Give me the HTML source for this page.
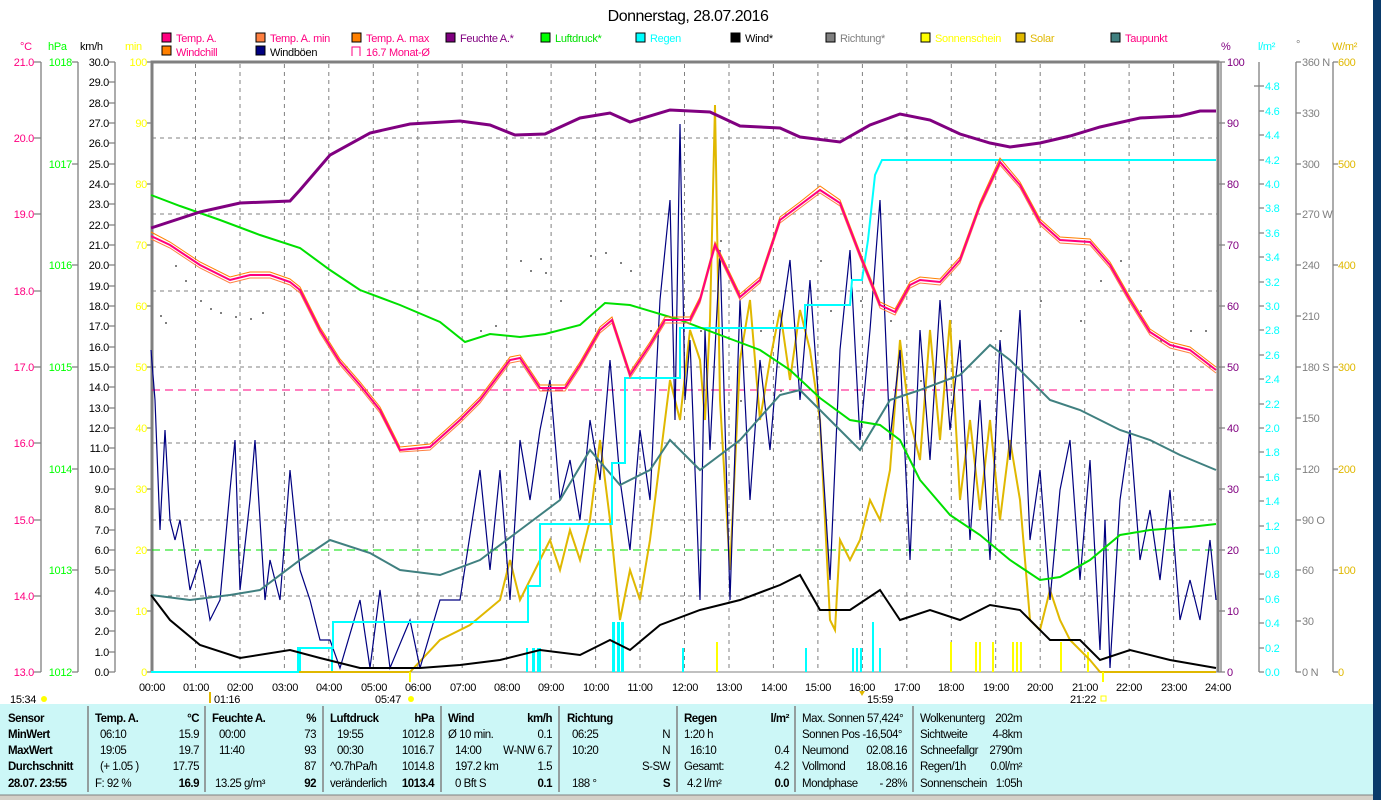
<!DOCTYPE html>
<html><head><meta charset="utf-8"><style>
html,body{margin:0;padding:0;background:#fff;width:1381px;height:800px;overflow:hidden}
svg{display:block;font-family:"Liberation Sans",sans-serif}
text{font-size:11px;letter-spacing:-0.3px}
.tb text{font-size:11.5px;letter-spacing:-0.5px}
</style></head><body>
<svg width="1381" height="800" viewBox="0 0 1381 800" xmlns="http://www.w3.org/2000/svg">
<rect width="1381" height="800" fill="#fff"/>
<text x="688" y="21" text-anchor="middle" style="font-size:16px;letter-spacing:-0.5px" fill="#000">Donnerstag, 28.07.2016</text>
<g stroke="#000" stroke-width="1">
<rect x="162" y="33" width="9" height="9" fill="#ff0080"/>
<rect x="162" y="46" width="9" height="9" fill="#ff8000"/>
<rect x="256" y="33" width="9" height="9" fill="#ff8040"/>
<rect x="256" y="46" width="9" height="9" fill="#000080"/>
<rect x="352" y="33" width="9" height="9" fill="#ff8000"/>
<rect x="446" y="33" width="9" height="9" fill="#800080"/>
<rect x="541" y="33" width="9" height="9" fill="#00ff00"/>
<rect x="636" y="33" width="9" height="9" fill="#00ffff"/>
<rect x="731" y="33" width="9" height="9" fill="#000"/>
<rect x="826" y="33" width="9" height="9" fill="#808080"/>
<rect x="921" y="33" width="9" height="9" fill="#ffff00"/>
<rect x="1016" y="33" width="9" height="9" fill="#e0b800"/>
<rect x="1111" y="33" width="9" height="9" fill="#408080"/>
</g>
<path d="M352 56V47h8v9" fill="none" stroke="#ff0080"/>
<g>
<text x="176" y="42" fill="#ff0080">Temp. A.</text>
<text x="176" y="56" fill="#ff0080">Windchill</text>
<text x="270" y="42" fill="#ff0080">Temp. A. min</text>
<text x="270" y="56" fill="#000">Windböen</text>
<text x="366" y="42" fill="#ff0080">Temp. A. max</text>
<text x="366" y="56" fill="#ff0080">16.7 Monat-Ø</text>
<text x="460" y="42" fill="#800080">Feuchte A.*</text>
<text x="555" y="42" fill="#00e000">Luftdruck*</text>
<text x="650" y="42" fill="#00ffff">Regen</text>
<text x="745" y="42" fill="#000">Wind*</text>
<text x="840" y="42" fill="#808080">Richtung*</text>
<text x="935" y="42" fill="#ffff00">Sonnenschein</text>
<text x="1030" y="42" fill="#e0b800">Solar</text>
<text x="1125" y="42" fill="#ff0080">Taupunkt</text>
</g>
<text x="20" y="50" fill="#ff0080">°C</text>
<text x="48" y="50" fill="#00ff00">hPa</text>
<text x="80" y="50" fill="#000">km/h</text>
<text x="125" y="50" fill="#ffff00">min</text>
<text x="1221" y="50" fill="#800080">%</text>
<text x="1258" y="50" fill="#00ffff">l/m²</text>
<text x="1296" y="48" fill="#808080">°</text>
<text x="1332" y="50" fill="#e0b800">W/m²</text>

<g stroke="#808080" stroke-dasharray="4,4" stroke-width="1">
<path d="M195.5 64V672M240 64V672M284.4 64V672M328.8 64V672M373.3 64V672M417.8 64V672M462.2 64V672M506.7 64V672M551.1 64V672M595.6 64V672M640 64V672M684.5 64V672M729 64V672M773.4 64V672M817.9 64V672M862.4 64V672M906.8 64V672M951.3 64V672M995.7 64V672M1040.2 64V672M1084.7 64V672M1129.1 64V672M1173.6 64V672"/>
<path d="M152 138H1217M152 214H1217M152 291H1217M152 367H1217M152 443H1217M152 520H1217M152 596H1217"/>
</g>
<path d="M152 672V62H1218V672" fill="none" stroke="#808080" stroke-width="3"/>
<path d="M152 672H1218" stroke="#808080" stroke-width="1"/>
<g stroke="#808080" stroke-width="1.3" fill="none">
<path d="M41 62V672M78 62V672M115 62V672M1221 62V672M1259 62V672M1296 62V672M1333 62V672"/>
<path d="M34 62h7M34 138h7M34 214h7M34 291h7M34 367h7M34 443h7M34 520h7M34 596h7M34 672h7"/>
<path d="M72 62h6M72 164h6M72 265h6M72 367h6M72 469h6M72 570h6M72 672h6"/>
<path d="M109 62h6M109 82h6M109 103h6M109 123h6M109 143h6M109 164h6M109 184h6M109 204h6M109 225h6M109 245h6M109 265h6M109 286h6M109 306h6M109 326h6M109 347h6M109 367h6M109 387h6M109 408h6M109 428h6M109 448h6M109 469h6M109 489h6M109 509h6M109 530h6M109 550h6M109 570h6M109 591h6M109 611h6M109 631h6M109 652h6M109 672h6"/>
<path d="M147 62h5M147 123h5M147 184h5M147 245h5M147 306h5M147 367h5M147 428h5M147 489h5M147 550h5M147 611h5M147 672h5"/>
<path d="M1218 62h7M1218 123h7M1218 184h7M1218 245h7M1218 306h7M1218 367h7M1218 428h7M1218 489h7M1218 550h7M1218 611h7M1218 672h7"/>
<path d="M1254 86h10M1259 111h5M1259 135h5M1259 160h5M1259 184h5M1259 208h5M1259 233h5M1259 257h5M1259 282h5M1259 306h5M1259 330h5M1259 355h5M1259 379h5M1259 404h5M1259 428h5M1259 452h5M1259 477h5M1259 501h5M1259 526h5M1259 550h5M1259 574h5M1259 599h5M1259 623h5M1259 648h5M1259 672h5"/>
<path d="M1296 62h5M1296 113h5M1296 164h5M1296 214h5M1296 265h5M1296 316h5M1296 367h5M1296 418h5M1296 469h5M1296 520h5M1296 570h5M1296 621h5M1296 672h5"/>
<path d="M1333 62h5M1333 164h5M1333 265h5M1333 367h5M1333 469h5M1333 570h5M1333 672h5"/>
</g>
<g fill="#ff0080" text-anchor="end">
<text x="34" y="66">21.0</text><text x="34" y="142">20.0</text><text x="34" y="218">19.0</text><text x="34" y="295">18.0</text><text x="34" y="371">17.0</text><text x="34" y="447">16.0</text><text x="34" y="524">15.0</text><text x="34" y="600">14.0</text><text x="34" y="676">13.0</text>
</g>
<g fill="#00ff00" text-anchor="end">
<text x="72" y="66">1018</text><text x="72" y="168">1017</text><text x="72" y="269">1016</text><text x="72" y="371">1015</text><text x="72" y="473">1014</text><text x="72" y="574">1013</text><text x="72" y="676">1012</text>
</g>
<g fill="#000" text-anchor="end">
<text x="109" y="66">30.0</text><text x="109" y="86">29.0</text><text x="109" y="107">28.0</text><text x="109" y="127">27.0</text><text x="109" y="147">26.0</text><text x="109" y="168">25.0</text><text x="109" y="188">24.0</text><text x="109" y="208">23.0</text><text x="109" y="229">22.0</text><text x="109" y="249">21.0</text><text x="109" y="269">20.0</text><text x="109" y="290">19.0</text><text x="109" y="310">18.0</text><text x="109" y="330">17.0</text><text x="109" y="351">16.0</text><text x="109" y="371">15.0</text><text x="109" y="391">14.0</text><text x="109" y="412">13.0</text><text x="109" y="432">12.0</text><text x="109" y="452">11.0</text><text x="109" y="473">10.0</text><text x="109" y="493">9.0</text><text x="109" y="513">8.0</text><text x="109" y="534">7.0</text><text x="109" y="554">6.0</text><text x="109" y="574">5.0</text><text x="109" y="595">4.0</text><text x="109" y="615">3.0</text><text x="109" y="635">2.0</text><text x="109" y="656">1.0</text><text x="109" y="676">0.0</text>
</g>
<g fill="#ffff00" text-anchor="end">
<text x="147" y="66">100</text><text x="147" y="127">90</text><text x="147" y="188">80</text><text x="147" y="249">70</text><text x="147" y="310">60</text><text x="147" y="371">50</text><text x="147" y="432">40</text><text x="147" y="493">30</text><text x="147" y="554">20</text><text x="147" y="615">10</text><text x="147" y="676">0</text>
</g>
<g fill="#800080">
<text x="1227" y="66">100</text><text x="1227" y="127">90</text><text x="1227" y="188">80</text><text x="1227" y="249">70</text><text x="1227" y="310">60</text><text x="1227" y="371">50</text><text x="1227" y="432">40</text><text x="1227" y="493">30</text><text x="1227" y="554">20</text><text x="1227" y="615">10</text><text x="1227" y="676">0</text>
</g>
<g fill="#00ffff">
<text x="1265" y="90">4.8</text><text x="1265" y="115">4.6</text><text x="1265" y="139">4.4</text><text x="1265" y="164">4.2</text><text x="1265" y="188">4.0</text><text x="1265" y="212">3.8</text><text x="1265" y="237">3.6</text><text x="1265" y="261">3.4</text><text x="1265" y="286">3.2</text><text x="1265" y="310">3.0</text><text x="1265" y="334">2.8</text><text x="1265" y="359">2.6</text><text x="1265" y="383">2.4</text><text x="1265" y="408">2.2</text><text x="1265" y="432">2.0</text><text x="1265" y="456">1.8</text><text x="1265" y="481">1.6</text><text x="1265" y="505">1.4</text><text x="1265" y="530">1.2</text><text x="1265" y="554">1.0</text><text x="1265" y="578">0.8</text><text x="1265" y="603">0.6</text><text x="1265" y="627">0.4</text><text x="1265" y="652">0.2</text><text x="1265" y="676">0.0</text>
</g>
<g fill="#808080">
<text x="1302" y="66">360 N</text><text x="1302" y="117">330</text><text x="1302" y="168">300</text><text x="1302" y="218">270 W</text><text x="1302" y="269">240</text><text x="1302" y="320">210</text><text x="1302" y="371">180 S</text><text x="1302" y="422">150</text><text x="1302" y="473">120</text><text x="1302" y="524">90 O</text><text x="1302" y="574">60</text><text x="1302" y="625">30</text><text x="1302" y="676">0 N</text>
</g>
<g fill="#e0b800">
<text x="1338" y="66">600</text><text x="1338" y="168">500</text><text x="1338" y="269">400</text><text x="1338" y="371">300</text><text x="1338" y="473">200</text><text x="1338" y="574">100</text><text x="1338" y="676">0</text>
</g>

<path d="M152 390H1217" stroke="#ff0080" stroke-dasharray="8,5" stroke-width="1"/>
<path d="M152 550H1217" stroke="#00e000" stroke-dasharray="8,5" stroke-width="1"/>

<g fill="#808080">
<rect x="160" y="315" width="2" height="2"/><rect x="165" y="322" width="2" height="2"/><rect x="175" y="265" width="2" height="2"/><rect x="185" y="280" width="2" height="2"/><rect x="200" y="300" width="2" height="2"/><rect x="210" y="308" width="2" height="2"/><rect x="220" y="312" width="2" height="2"/><rect x="235" y="316" width="2" height="2"/><rect x="250" y="318" width="2" height="2"/><rect x="262" y="312" width="2" height="2"/><rect x="480" y="330" width="2" height="2"/><rect x="495" y="325" width="2" height="2"/><rect x="520" y="260" width="2" height="2"/><rect x="530" y="270" width="2" height="2"/><rect x="540" y="258" width="2" height="2"/><rect x="545" y="272" width="2" height="2"/><rect x="560" y="300" width="2" height="2"/><rect x="590" y="255" width="2" height="2"/><rect x="605" y="252" width="2" height="2"/><rect x="620" y="262" width="2" height="2"/><rect x="630" y="270" width="2" height="2"/><rect x="650" y="330" width="2" height="2"/><rect x="700" y="330" width="2" height="2"/><rect x="720" y="240" width="2" height="2"/><rect x="740" y="400" width="2" height="2"/><rect x="760" y="330" width="2" height="2"/><rect x="780" y="390" width="2" height="2"/><rect x="820" y="260" width="2" height="2"/><rect x="830" y="310" width="2" height="2"/><rect x="860" y="300" width="2" height="2"/><rect x="890" y="320" width="2" height="2"/><rect x="920" y="380" width="2" height="2"/><rect x="960" y="360" width="2" height="2"/><rect x="1000" y="330" width="2" height="2"/><rect x="1040" y="300" width="2" height="2"/><rect x="1080" y="320" width="2" height="2"/><rect x="1100" y="280" width="2" height="2"/><rect x="1120" y="260" width="2" height="2"/><rect x="1140" y="310" width="2" height="2"/><rect x="1160" y="340" width="2" height="2"/><rect x="1190" y="330" width="2" height="2"/><rect x="1205" y="330" width="2" height="2"/>
</g>

<g fill="#00ffff">
<rect x="299" y="648" width="2" height="24"/><rect x="331" y="648" width="2" height="24"/><rect x="526" y="648" width="2" height="24"/><rect x="532" y="648" width="3" height="24"/><rect x="537" y="648" width="4" height="24"/><rect x="612" y="622" width="3" height="50"/><rect x="617" y="622" width="3" height="50"/><rect x="621" y="622" width="3" height="50"/><rect x="682" y="648" width="2" height="24"/><rect x="805" y="648" width="2" height="24"/><rect x="852" y="648" width="2" height="24"/><rect x="856" y="648" width="2" height="24"/><rect x="860" y="648" width="2" height="24"/><rect x="872" y="622" width="2" height="50"/><rect x="879" y="648" width="2" height="24"/>
</g>
<g fill="#ffff00">
<rect x="716" y="642" width="2" height="30"/><rect x="950" y="642" width="2" height="30"/><rect x="975" y="642" width="2" height="30"/><rect x="979" y="642" width="2" height="30"/><rect x="992" y="642" width="2" height="30"/><rect x="1012" y="642" width="2" height="30"/><rect x="1016" y="642" width="2" height="30"/><rect x="1020" y="642" width="2" height="30"/><rect x="1060" y="642" width="2" height="30"/><rect x="1087" y="652" width="2" height="20"/>
</g>

<polyline fill="none" stroke="#e0b800" stroke-width="2" points="151,672 410,672 440,640 470,625 500,600 510,560 520,600 540,560 550,540 560,570 570,530 580,560 590,520 600,440 610,520 620,620 630,570 640,600 650,540 660,460 670,380 680,420 690,330 700,360 705,420 710,320 715,105 720,400 730,570 740,360 750,300 760,420 770,360 780,310 790,380 800,310 810,350 820,420 830,620 835,630 840,540 850,560 860,540 870,500 880,520 890,470 900,340 910,420 920,460 930,330 940,440 950,320 960,500 970,420 980,510 990,420 1000,520 1010,440 1020,500 1030,620 1040,630 1050,590 1060,620 1070,640 1080,650 1090,660 1100,672 1216,672"/>
<polyline fill="none" stroke="#000080" stroke-width="1.2" points="151,350 155,400 160,530 165,430 170,520 175,540 180,520 190,590 200,560 210,620 220,600 230,490 235,440 240,590 250,500 255,440 265,600 270,560 280,600 290,470 300,570 310,600 320,640 330,640 340,668 360,600 370,668 380,590 390,668 410,620 420,668 440,600 460,600 480,470 490,570 500,470 510,600 520,440 530,500 540,430 550,380 560,500 570,460 580,520 590,420 600,480 610,360 620,480 630,550 640,430 650,500 660,300 670,200 675,420 680,124 685,400 690,340 700,600 705,330 710,450 720,250 730,600 740,300 750,500 760,360 770,450 780,330 790,260 800,400 810,280 820,420 830,580 840,350 850,250 860,440 870,330 880,200 890,440 900,350 910,560 920,330 930,460 940,300 950,430 960,340 970,540 980,400 990,560 1000,340 1010,460 1020,310 1030,540 1040,470 1050,600 1060,490 1070,440 1080,580 1090,460 1100,650 1105,520 1110,668 1120,500 1130,430 1140,560 1150,510 1160,580 1170,490 1180,620 1190,580 1200,620 1210,540 1216,600"/>
<polyline fill="none" stroke="#408080" stroke-width="2" points="151,595 190,600 230,595 260,590 300,560 330,540 370,553 400,570 440,575 480,560 520,530 560,500 590,450 620,485 650,470 670,440 700,470 740,440 780,395 800,390 830,420 860,450 890,400 920,390 960,375 990,345 1010,360 1050,400 1080,410 1120,430 1150,440 1180,455 1216,470"/>
<polyline fill="none" stroke="#00ffff" stroke-width="2" points="151,672 298,672 298,648 333,648 333,622 528,622 528,586 540,586 540,524 612,524 612,463 625,463 625,378 680,378 680,328 805,328 805,305 850,305 852,280 862,280 868,240 875,175 882,160 1216,160"/>
<polyline fill="none" stroke="#000" stroke-width="2" points="151,595 170,620 200,645 240,658 290,650 320,658 360,668 420,668 460,665 500,660 540,650 580,655 610,640 630,650 660,625 700,610 740,600 780,585 800,575 820,610 850,610 880,590 900,620 930,610 960,620 990,605 1020,610 1050,640 1080,640 1100,660 1130,650 1170,660 1216,668"/>
<polyline fill="none" stroke="#00e000" stroke-width="2" points="151,195 180,206 220,220 260,235 300,248 330,270 360,290 400,305 440,322 465,342 490,334 520,337 545,334 580,325 605,303 630,305 680,320 720,335 760,350 790,370 820,398 850,420 880,425 900,440 920,480 950,515 980,535 1010,560 1040,580 1060,577 1090,560 1120,535 1150,530 1190,527 1216,524"/>
<polyline fill="none" stroke="#ff8000" stroke-width="1" points="151,232 170,242 200,262 230,277 250,272 270,272 290,279 300,287 320,327 340,359 360,382 380,407 400,447 430,444 460,417 480,397 510,357 520,355 540,385 565,385 580,362 600,327 612,317 630,372 650,342 665,317 690,317 700,297 715,242 740,294 760,277 780,217 800,202 820,186 840,200 860,252 880,302 895,309 910,282 920,277 940,279 960,257 980,202 1000,158 1020,182 1040,219 1060,237 1090,239 1110,262 1130,297 1150,329 1170,342 1190,347 1216,367"/>
<polyline fill="none" stroke="#ff8040" stroke-width="1" points="151,239 170,248 200,268 230,283 250,278 270,278 290,285 300,293 320,333 340,365 360,388 380,413 400,452 430,450 460,423 480,403 510,363 520,361 540,391 565,391 580,368 600,333 612,323 630,378 650,348 665,323 690,323 700,303 715,248 740,300 760,283 780,223 800,208 820,193 840,206 860,258 880,308 895,315 910,288 920,283 940,285 960,263 980,208 1000,165 1020,188 1040,225 1060,243 1090,245 1110,268 1130,303 1150,335 1170,348 1190,353 1216,373"/>
<polyline fill="none" stroke="#ff0080" stroke-width="2" points="151,236 170,245 200,265 230,280 250,275 270,275 290,282 300,290 320,330 340,362 360,385 380,410 400,450 430,447 460,420 480,400 510,360 520,358 540,388 565,388 580,365 600,330 612,320 630,375 650,345 665,320 690,320 700,300 715,245 740,297 760,280 780,220 800,205 820,190 840,203 860,255 880,305 895,312 910,285 920,280 940,282 960,260 980,205 1000,162 1020,185 1040,222 1060,240 1090,242 1110,265 1130,300 1150,332 1170,345 1190,350 1216,370"/>
<polyline fill="none" stroke="#800080" stroke-width="3" points="151,228 200,212 240,203 290,201 300,190 330,155 370,133 410,124 460,121 490,125 515,135 545,134 580,118 610,113 630,122 670,110 710,112 740,126 780,128 800,137 840,142 870,125 900,114 930,120 960,134 990,143 1010,147 1040,143 1070,136 1100,127 1140,118 1180,116 1200,111 1216,111"/>

<g fill="#000" text-anchor="middle">
<text x="152" y="691">00:00</text><text x="196" y="691">01:00</text><text x="240" y="691">02:00</text><text x="285" y="691">03:00</text><text x="329" y="691">04:00</text><text x="374" y="691">05:00</text><text x="418" y="691">06:00</text><text x="463" y="691">07:00</text><text x="507" y="691">08:00</text><text x="551" y="691">09:00</text><text x="596" y="691">10:00</text><text x="640" y="691">11:00</text><text x="685" y="691">12:00</text><text x="729" y="691">13:00</text><text x="774" y="691">14:00</text><text x="818" y="691">15:00</text><text x="862" y="691">16:00</text><text x="907" y="691">17:00</text><text x="951" y="691">18:00</text><text x="996" y="691">19:00</text><text x="1040" y="691">20:00</text><text x="1085" y="691">21:00</text><text x="1129" y="691">22:00</text><text x="1174" y="691">23:00</text><text x="1218" y="691">24:00</text>
</g>
<g fill="#000">
<text x="10" y="703">15:34</text><text x="214" y="703">01:16</text><text x="375" y="703">05:47</text><text x="867" y="703">15:59</text><text x="1070" y="703">21:22</text>
</g>
<circle cx="44" cy="699" r="3" fill="#ffff00"/>
<circle cx="411" cy="699" r="3" fill="#ffff00"/>
<rect x="1101" y="696" width="5" height="5" fill="none" stroke="#ffff00"/>
<path d="M210 703V692" stroke="#e0b800" stroke-width="2"/>
<path d="M862 696l-3 -5h6z" fill="#e0b800"/>
<path d="M410 672V682M1103 672V682" stroke="#ffff00" stroke-width="2"/>

<rect x="0" y="704" width="1373" height="96" fill="#ccf7f7"/>
<g stroke="#808080" stroke-width="1.5">
<path d="M88 706V792M205 706V792M323 706V792M441 706V792M559 706V792M677 706V792M795 706V792M913 706V792"/>
</g>
<rect x="0" y="795" width="1373" height="5" fill="#d4d0c8"/>
<path d="M0 795H1373" stroke="#808080"/>
<g class="tb">
<g style="font-weight:bold" fill="#000">
<text x="8" y="722">Sensor</text><text x="8" y="738">MinWert</text><text x="8" y="754">MaxWert</text><text x="8" y="770">Durchschnitt</text><text x="8" y="787">28.07. 23:55</text>
<text x="95" y="722">Temp. A.</text><text x="199" y="722" text-anchor="end">°C</text>
<text x="212" y="722">Feuchte A.</text><text x="316" y="722" text-anchor="end">%</text>
<text x="330" y="722">Luftdruck</text><text x="434" y="722" text-anchor="end">hPa</text>
<text x="448" y="722">Wind</text><text x="552" y="722" text-anchor="end">km/h</text>
<text x="567" y="722">Richtung</text>
<text x="684" y="722">Regen</text><text x="789" y="722" text-anchor="end">l/m²</text>
<text x="199" y="787" text-anchor="end">16.9</text><text x="316" y="787" text-anchor="end">92</text><text x="434" y="787" text-anchor="end">1013.4</text><text x="552" y="787" text-anchor="end">0.1</text><text x="670" y="787" text-anchor="end">S</text><text x="789" y="787" text-anchor="end">0.0</text>
</g>
<g fill="#000">
<text x="100" y="738">06:10</text><text x="199" y="738" text-anchor="end">15.9</text>
<text x="100" y="754">19:05</text><text x="199" y="754" text-anchor="end">19.7</text>
<text x="100" y="770">(+ 1.05 )</text><text x="199" y="770" text-anchor="end">17.75</text>
<text x="95" y="787">F: 92 %</text>
<text x="219" y="738">00:00</text><text x="316" y="738" text-anchor="end">73</text>
<text x="219" y="754">11:40</text><text x="316" y="754" text-anchor="end">93</text>
<text x="316" y="770" text-anchor="end">87</text>
<text x="215" y="787">13.25 g/m³</text>
<text x="337" y="738">19:55</text><text x="434" y="738" text-anchor="end">1012.8</text>
<text x="337" y="754">00:30</text><text x="434" y="754" text-anchor="end">1016.7</text>
<text x="330" y="770">^0.7hPa/h</text><text x="434" y="770" text-anchor="end">1014.8</text>
<text x="330" y="787">veränderlich</text>
<text x="448" y="738">Ø 10 min.</text><text x="552" y="738" text-anchor="end">0.1</text>
<text x="455" y="754">14:00</text><text x="552" y="754" text-anchor="end">W-NW 6.7</text>
<text x="455" y="770">197.2 km</text><text x="552" y="770" text-anchor="end">1.5</text>
<text x="455" y="787">0 Bft S</text>
<text x="572" y="738">06:25</text><text x="670" y="738" text-anchor="end">N</text>
<text x="572" y="754">10:20</text><text x="670" y="754" text-anchor="end">N</text>
<text x="670" y="770" text-anchor="end">S-SW</text>
<text x="572" y="787">188 °</text>
<text x="684" y="738">1:20 h</text>
<text x="690" y="754">16:10</text><text x="789" y="754" text-anchor="end">0.4</text>
<text x="684" y="770">Gesamt:</text><text x="789" y="770" text-anchor="end">4.2</text>
<text x="687" y="787">4.2 l/m²</text>
<text x="802" y="722">Max. Sonnen 57,424°</text>
<text x="802" y="738">Sonnen Pos  -16,504°</text>
<text x="802" y="754">Neumond</text><text x="907" y="754" text-anchor="end">02.08.16</text>
<text x="802" y="770">Vollmond</text><text x="907" y="770" text-anchor="end">18.08.16</text>
<text x="802" y="787">Mondphase</text><text x="907" y="787" text-anchor="end">- 28%</text>
<text x="920" y="722">Wolkenunterg</text><text x="1022" y="722" text-anchor="end">202m</text>
<text x="920" y="738">Sichtweite</text><text x="1022" y="738" text-anchor="end">4-8km</text>
<text x="920" y="754">Schneefallgr</text><text x="1022" y="754" text-anchor="end">2790m</text>
<text x="920" y="770">Regen/1h</text><text x="1022" y="770" text-anchor="end">0.0l/m²</text>
<text x="920" y="787">Sonnenschein</text><text x="1022" y="787" text-anchor="end">1:05h</text>
</g>
</g>
<rect x="1373" y="0" width="8" height="800" fill="#0a3a6a"/>
</svg>
</body></html>
